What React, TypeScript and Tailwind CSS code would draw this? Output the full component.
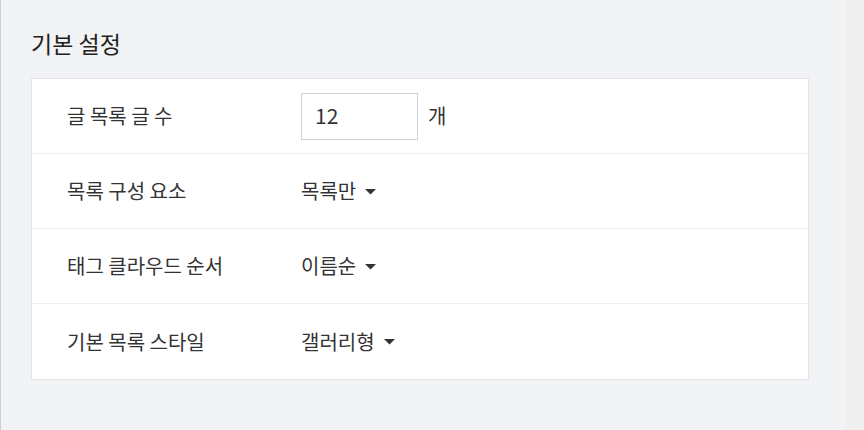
import React from "react";

const font = { fontFamily: '"Noto Sans CJK KR", "Noto Sans", sans-serif' };

function Caret() {
  return (
    <svg width="11" height="6" viewBox="0 0 11 6" className="ml-[9px] mt-[1px]">
      <path d="M0 0 L11 0 L5.5 5.5 Z" fill="#333" />
    </svg>
  );
}

function Row({ label, children, last }: { label: string; children: React.ReactNode; last?: boolean }) {
  return (
    <div className={`flex items-center h-[75px] ${last ? "" : "border-b border-[#eeeff1]"}`}>
      <div className="w-[269px] pl-[35px] text-[20px] text-[#333]">{label}</div>
      <div className="flex items-center text-[20px] text-[#333]">{children}</div>
    </div>
  );
}

export default function App() {
  return (
    <div className="flex w-[864px] h-[430px] bg-[#efefef]" style={font}>
      <div className="w-[845px] h-full bg-[#f2f3f5] border-l border-[#cfcfd1] pl-[30px] pt-[28px]">
        <h1 className="text-[23px] text-[#222] leading-[30px] h-[50px]">기본 설정</h1>
        <div className="w-[778px] bg-white border border-[#e2e4e9]">
          <Row label="글 목록 글 수">
            <div className="w-[117px] h-[47px] border border-[#cdd3dc] flex items-center pl-[13px] text-[21px]">12</div>
            <span className="ml-[10px]">개</span>
          </Row>
          <Row label="목록 구성 요소">
            <span>목록만</span>
            <Caret />
          </Row>
          <Row label="태그 클라우드 순서">
            <span>이름순</span>
            <Caret />
          </Row>
          <Row label="기본 목록 스타일" last>
            <span>갤러리형</span>
            <Caret />
          </Row>
        </div>
      </div>
    </div>
  );
}
